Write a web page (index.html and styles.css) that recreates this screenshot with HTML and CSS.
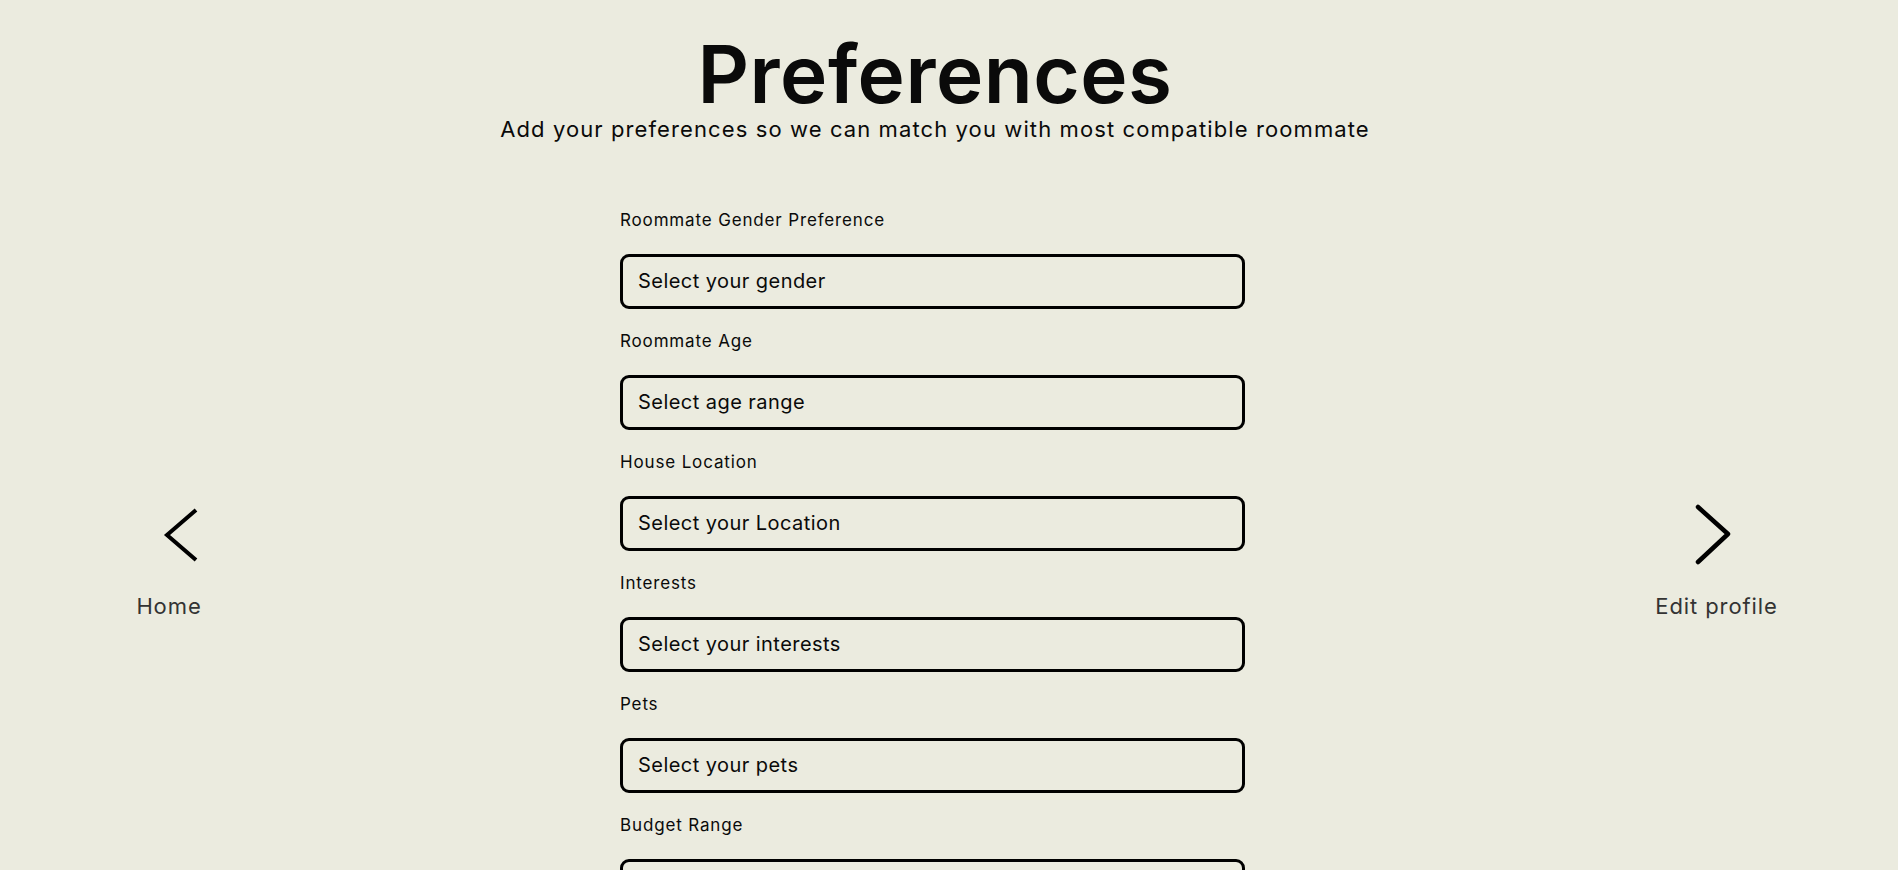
FILE: index.html
```html
<!DOCTYPE html>
<html lang="en">
<head>
<meta charset="utf-8">
<title>Preferences</title>
<link rel="stylesheet" href="styles.css">
</head>
<body>
<div class="page">
  <header class="header">
    <h1 class="title">Preferences</h1>
    <p class="subtitle">Add your preferences so we can match you with most compatible roommate</p>
  </header>
  <div class="layout">
    <nav class="side side-left">
      <a class="nav-item nav-home" href="#">
        <svg class="chev chev-left" width="66" height="65" viewBox="0 0 66 65" aria-hidden="true">
          <polyline points="60,9 31,34 60,59" fill="none" stroke="#000" stroke-width="4" stroke-linejoin="miter"/>
        </svg>
        <span class="nav-label">Home</span>
      </a>
    </nav>
    <form class="form">
      <div class="field">
        <label class="field-label">Roommate Gender Preference</label>
        <div class="select">Select your gender</div>
      </div>
      <div class="field">
        <label class="field-label">Roommate Age</label>
        <div class="select">Select age range</div>
      </div>
      <div class="field">
        <label class="field-label">House Location</label>
        <div class="select">Select your Location</div>
      </div>
      <div class="field">
        <label class="field-label">Interests</label>
        <div class="select">Select your interests</div>
      </div>
      <div class="field">
        <label class="field-label">Pets</label>
        <div class="select">Select your pets</div>
      </div>
      <div class="field">
        <label class="field-label">Budget Range</label>
        <div class="select">Select your budget</div>
      </div>
    </form>
    <nav class="side side-right">
      <a class="nav-item nav-edit" href="#">
        <svg class="chev chev-right" width="117" height="65" viewBox="0 0 117 65" aria-hidden="true">
          <polyline points="40,6 70,33 40,61" fill="none" stroke="#000" stroke-width="4.5" stroke-linecap="round" stroke-linejoin="round"/>
        </svg>
        <span class="nav-label">Edit profile</span>
      </a>
    </nav>
  </div>
</div>
</body>
</html>
```
FILE: styles.css
```css
* { box-sizing: border-box; }

html, body {
  margin: 0;
  padding: 0;
  background: #ebebdf;
  color: #0a0a0a;
  font-family: Inter, "Noto Sans", sans-serif;
  overflow: hidden;
}

.page {
  width: 1870px;
  height: 870px;
}

.header {
  display: flex;
  flex-direction: column;
  align-items: center;
  padding-top: 34px;
}

.title {
  margin: 0;
  font-size: 80px;
  line-height: 80px;
  font-weight: 600;
  letter-spacing: 0.5px;
}

.subtitle {
  margin: 0;
  font-size: 22px;
  line-height: 31.5px;
  font-weight: 400;
  letter-spacing: 1.1px;
  white-space: nowrap;
}

.layout {
  display: grid;
  grid-template-columns: 620px 625px 1fr;
}

.side {
  padding-top: 355px;
}

.side-left {
  padding-left: 134px;
}

.side-right {
  padding-left: 413px;
}

.nav-item {
  display: flex;
  flex-direction: column;
  align-items: center;
  text-decoration: none;
  color: #333;
}

.nav-home { width: 70px; }
.nav-edit { width: 117px; }

.chev { display: block; }

.nav-label {
  margin-top: 25px;
  font-size: 22px;
  line-height: 30px;
  font-weight: 400;
  letter-spacing: 0.9px;
  white-space: nowrap;
}

.form {
  padding-top: 62px;
  display: flex;
  flex-direction: column;
}

.field {
  display: flex;
  flex-direction: column;
}

.field-label {
  display: block;
  font-size: 17px;
  line-height: 24px;
  letter-spacing: 0.85px;
  margin-bottom: 22px;
  color: #0a0a0a;
}

.select {
  height: 55px;
  border: 3px solid #000;
  border-radius: 9px;
  padding: 0 15px;
  display: flex;
  align-items: center;
  font-size: 20px;
  letter-spacing: 0.45px;
  color: #0a0a0a;
  margin-bottom: 20px;
}
```
